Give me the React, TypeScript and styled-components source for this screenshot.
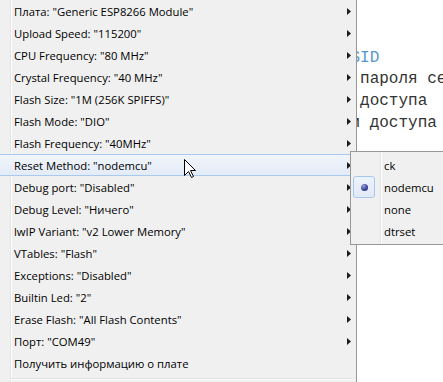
import React from "react";
import styled, { createGlobalStyle, css } from "styled-components";

const Global = createGlobalStyle`
  html, body { margin: 0; padding: 0; background: #ffffff; overflow: hidden; }
  body { width: 443px; height: 382px; }
  #root { width: 443px; height: 382px; position: relative; overflow: hidden; }
`;

const Editor = styled.div`
  padding: 4.3px 0 0 52.8px;
  font-family: "Liberation Mono", "DejaVu Sans Mono", monospace;
  font-size: 16px;
  line-height: 21.7px;
  color: #333333;
  white-space: pre;
`;

const CodeLine = styled.div<{ $tone?: "plain" | "string" }>`
  height: 21.7px;
  color: ${(p) => (p.$tone === "string" ? "#5596cc" : "#333333")};
`;

const Menu = styled.div<{ $left: number; $top: number; $width: number }>`
  position: absolute;
  left: ${(p) => p.$left}px;
  top: ${(p) => p.$top}px;
  width: ${(p) => p.$width}px;
  box-sizing: border-box;
  border: 1px solid #979797;
  padding: 2px;
  background:
    linear-gradient(
      to right,
      transparent 29px,
      #e2e3e3 29px,
      #e2e3e3 30px,
      #ffffff 30px,
      #ffffff 31px,
      transparent 31px
    ),
    #f0f0f0;
  font-family: "Open Sans", "Noto Sans", sans-serif;
  font-size: 11.3px;
  color: #000000;
  display: flex;
  flex-direction: column;
`;

const Item = styled.div<{ $hot?: boolean }>`
  position: relative;
  box-sizing: border-box;
  height: 22px;
  line-height: 20px;
  padding: 0 2px 0 30px;
  border: 1px solid transparent;
  border-radius: 3px;
  display: flex;
  align-items: center;
  justify-content: space-between;
  white-space: nowrap;
  ${(p) =>
    p.$hot &&
    css`
      border-color: #a9c9ee;
      background: linear-gradient(#f1f5fb, #e3ebf7);
    `}
`;

const Label = styled.span`
  padding-top: 1px;
`;

const Arrow = styled.svg`
  width: 4px;
  height: 7px;
  flex: none;
`;

const Separator = styled.div`
  height: 9px;
  margin-left: 27px;
  display: flex;
  flex-direction: column;
  justify-content: center;
  &::before {
    content: "";
    display: block;
    height: 1px;
    background: #e0e0e0;
  }
  &::after {
    content: "";
    display: block;
    height: 1px;
    background: #ffffff;
  }
`;

const CheckBox = styled.span`
  position: absolute;
  left: -1px;
  top: -1px;
  box-sizing: border-box;
  width: 22px;
  height: 22px;
  border: 1px solid #a8c7ec;
  border-radius: 3px;
  background: linear-gradient(#eef3fb, #e1eaf7);
  display: flex;
  align-items: center;
  justify-content: center;
`;

const Bullet = styled.span`
  width: 7px;
  height: 7px;
  border-radius: 50%;
  background: radial-gradient(circle at 35% 30%, #9aa2da 0%, #3c46a0 55%, #1d246a 100%);
`;

const Cursor = styled.svg`
  position: absolute;
  left: 184px;
  top: 159px;
  width: 13px;
  height: 20px;
`;

const mainItems: { label: string; sub?: boolean; hot?: boolean }[] = [
  { label: 'Плата: "Generic ESP8266 Module"', sub: true },
  { label: 'Upload Speed: "115200"', sub: true },
  { label: 'CPU Frequency: "80 MHz"', sub: true },
  { label: 'Crystal Frequency: "40 MHz"', sub: true },
  { label: 'Flash Size: "1M (256K SPIFFS)"', sub: true },
  { label: 'Flash Mode: "DIO"', sub: true },
  { label: 'Flash Frequency: "40MHz"', sub: true },
  { label: 'Reset Method: "nodemcu"', sub: true, hot: true },
  { label: 'Debug port: "Disabled"', sub: true },
  { label: 'Debug Level: "Ничего"', sub: true },
  { label: 'lwIP Variant: "v2 Lower Memory"', sub: true },
  { label: 'VTables: "Flash"', sub: true },
  { label: 'Exceptions: "Disabled"', sub: true },
  { label: 'Builtin Led: "2"', sub: true },
  { label: 'Erase Flash: "All Flash Contents"', sub: true },
  { label: 'Порт: "COM49"', sub: true },
  { label: "Получить информацию о плате" },
];

const resetOptions = ["ck", "nodemcu", "none", "dtrset"];

/* Code lines: the hidden head of each line is padded so that the visible tail
   lands on the same monospace column as in the editor behind the menu. */
const codeLines: { head: string; tail: string; col: number; tone?: "plain" | "string" }[] = [
  { head: "", tail: "", col: 0 },
  { head: "", tail: "", col: 0 },
  { head: "  // Имя сети WiFi,", tail: " SSID", col: 29, tone: "string" },
  { head: "  // Сюда вводится значение", tail: " пароля сети WiFi", col: 31 },
  { head: "  // Имя точки", tail: " доступа", col: 31 },
  { head: "  // Пароль точк", tail: "и доступа", col: 31 },
];

const SubArrow = () => (
  <Arrow viewBox="0 0 4 7">
    <polygon points="0,0 4,3.5 0,7" fill="#1c1c1c" />
  </Arrow>
);

export default function App() {
  return (
    <>
      <Global />
      <Editor>
        {codeLines.map((l, i) => (
          <CodeLine key={i} $tone={l.tone}>
            {l.tail ? l.head.padEnd(l.col) + l.tail : "\u00a0"}
          </CodeLine>
        ))}
      </Editor>

      <Menu $left={-20} $top={-3} $width={377}>
        {mainItems.map((it) => (
          <Item key={it.label} $hot={it.hot}>
            <Label>{it.label}</Label>
            {it.sub && <SubArrow />}
          </Item>
        ))}
        <Separator />
      </Menu>

      <Menu $left={350} $top={151} $width={110}>
        {resetOptions.map((o) => (
          <Item key={o}>
            {o === "nodemcu" && (
              <CheckBox>
                <Bullet />
              </CheckBox>
            )}
            <Label>{o}</Label>
          </Item>
        ))}
      </Menu>

      <Cursor viewBox="0 0 13 20">
        <path
          d="M0.5 0.5 L0.5 16.5 L4.5 12.5 L7.5 18.5 L9.5 17.5 L6.5 11.5 L11.5 11.5 Z"
          fill="#ffffff"
          stroke="#000000"
          strokeWidth="1"
          strokeLinejoin="miter"
        />
      </Cursor>
    </>
  );
}
